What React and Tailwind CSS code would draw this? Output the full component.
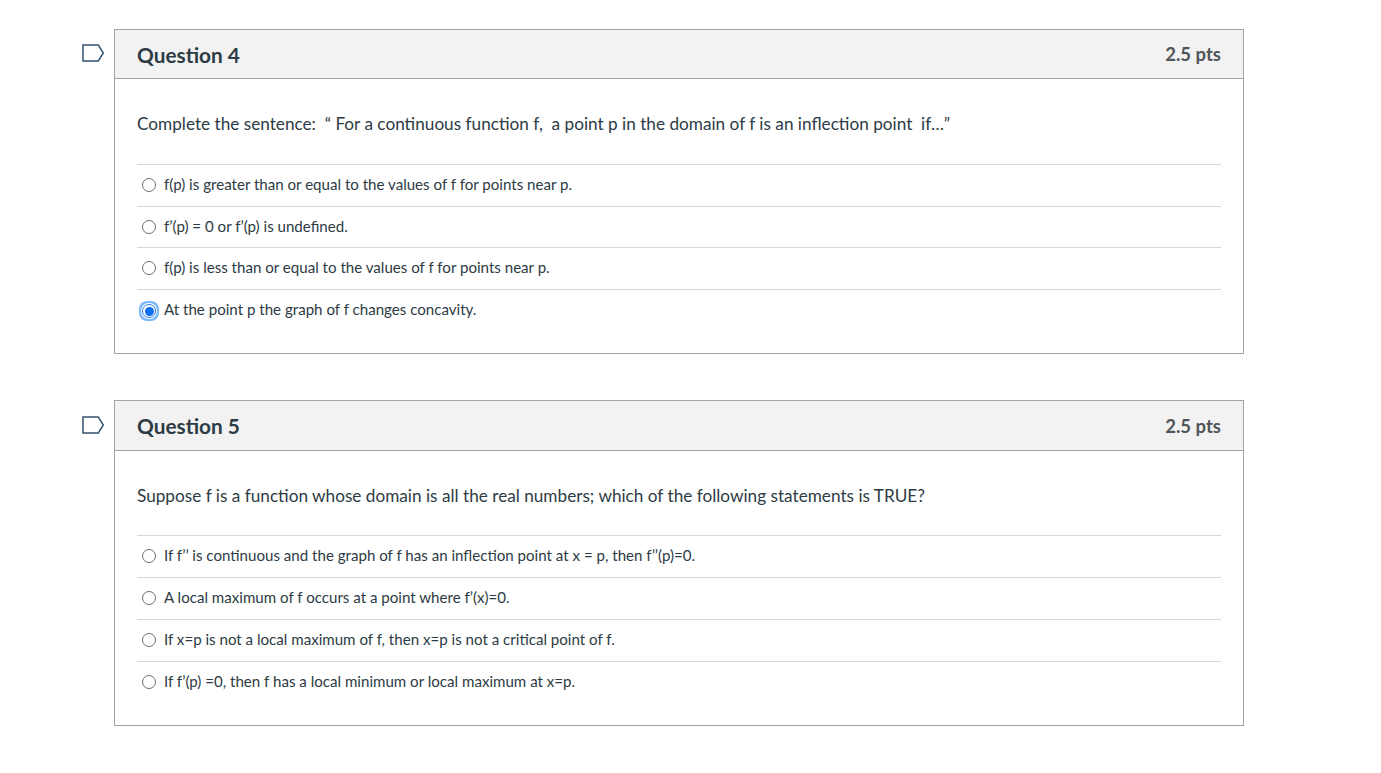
const questions = [
  {
    title: "Question 4",
    text: "Complete the sentence:\u00a0 “ For a continuous function f,\u00a0 a point p in the domain of f is an inflection point\u00a0 if…”",
    answers: [
      "f(p) is greater than or equal to the values of f for points near p.",
      "f’(p) = 0 or f’(p) is undefined.",
      "f(p) is less than or equal to the values of f for points near p.",
      "At the point p the graph of f changes concavity.",
    ],
    selected: 3,
    header: "h-[49px] pt-[2px]",
    pts: "mt-0",
    body: "pb-[22.6px]",
    textGap: "mb-[28px]",
    row: "h-[41.6px]",
    flag: "top-[14px]",
  },
  {
    title: "Question 5",
    text: "Suppose f is a function whose domain is all the real numbers; which of the following statements is TRUE?",
    answers: [
      "If f’’ is continuous and the graph of f has an inflection point at x = p, then f’’(p)=0.",
      "A local maximum of f occurs at a point where f’(x)=0.",
      "If x=p is not a local maximum of f, then x=p is not a critical point of f.",
      "If f’(p) =0, then f has a local minimum or local maximum at x=p.",
    ],
    selected: -1,
    header: "h-[50px] pt-[1px]",
    pts: "mt-[2px]",
    body: "pb-[22px]",
    textGap: "mb-[27px]",
    row: "h-[42px]",
    flag: "top-[15px]",
  },
];

function Flag({ className }) {
  return (
    <svg className={`absolute left-[-33px] ${className}`} width="23" height="18" viewBox="0 0 23 18" fill="none">
      <path d="M1 1H16.3L21.3 9L16.3 17H1Z" stroke="#34536e" strokeWidth="1.5" />
    </svg>
  );
}

function Radio({ checked }) {
  if (checked) {
    return (
      <span className="w-[20px] h-[20px] mx-[-3px] mt-[4px] rounded-[8px] bg-[#7db8fb] flex items-center justify-center shrink-0">
        <span className="w-[16px] h-[16px] rounded-full bg-white flex items-center justify-center">
          <span className="w-[14px] h-[14px] rounded-full border border-[#2a7bec] flex items-center justify-center">
            <span className="w-[9px] h-[9px] rounded-full bg-[#0f6ff0]" />
          </span>
        </span>
      </span>
    );
  }
  return <span className="w-[14px] h-[14px] mt-[2px] rounded-full border border-[#6a6e72] bg-white shrink-0" />;
}

function Question({ q }) {
  return (
    <div className="relative border border-[#a3a3a3] bg-white">
      <Flag className={q.flag} />
      <div className={`${q.header} bg-[#f2f2f2] border-b border-[#a3a3a3] px-[22px] flex items-center justify-between`}>
        <span className="text-[20.8px] font-bold text-[#2d3b45]">{q.title}</span>
        <span className={`text-[18.5px] font-bold text-[#4f5559] ${q.pts}`}>2.5 pts</span>
      </div>
      <div className={`px-[22px] pt-[33px] ${q.body}`}>
        <p className={`text-[17.2px] leading-[24px] text-[#2d3b45] ${q.textGap}`}>{q.text}</p>
        <div>
          {q.answers.map((a, i) => (
            <div key={i} className={`${q.row} border-t border-[#d7d7d7] flex items-center gap-[8px] pl-[5px] pb-[2px]`}>
              <Radio checked={i === q.selected} />
              <span className="text-[15.1px] text-[#2d3b45]">{a}</span>
            </div>
          ))}
        </div>
      </div>
    </div>
  );
}

export default function App() {
  return (
    <div className="min-h-[773px] bg-white pt-[29px] pl-[114px] font-['Lato','Open_Sans',sans-serif]">
      <div className="w-[1130px] flex flex-col gap-[46px]">
        {questions.map((q) => (
          <Question key={q.title} q={q} />
        ))}
      </div>
    </div>
  );
}
